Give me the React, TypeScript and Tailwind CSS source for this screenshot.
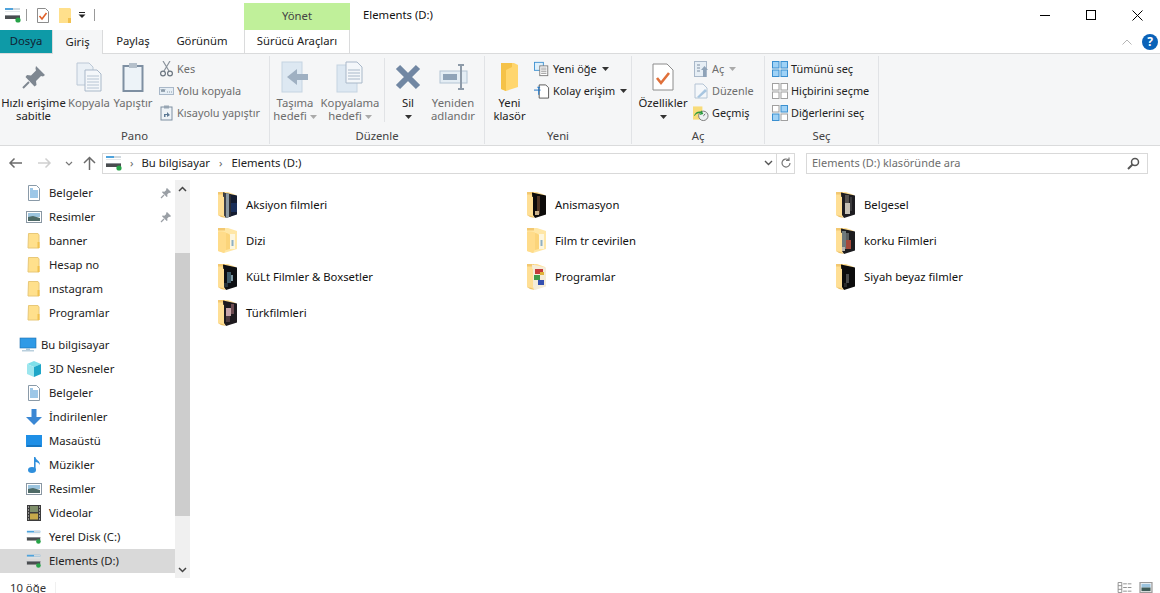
import React from "react";

const Drive = ({ s = 18 }: { s?: number }) => (
  <svg width={s} height={s} viewBox="0 0 18 18">
    <rect x="1" y="2" width="15" height="2" fill="#4fa3dc" />
    <rect x="9" y="2" width="7" height="2" fill="#cfd8de" />
    <rect x="1" y="5" width="15" height="1" fill="#e4e8ea" />
    <rect x="1" y="9" width="15" height="4" fill="#4a4d50" />
    <rect x="1" y="9" width="15" height="1" fill="#8d9196" />
    <circle cx="14" cy="14" r="2.6" fill="#27a348" />
  </svg>
);

const SmallFolder = () => (
  <svg width="16" height="18" viewBox="0 0 16 18">
    <path d="M2.5 1.5h9.500l1 1.500v13h-11z" fill="#ffe08c" stroke="#e8c878" strokeWidth="1" />
    <rect x="11.500" y="10" width="2" height="6" fill="#f2c14e" />
  </svg>
);

const Doc = () => (
  <svg width="16" height="18" viewBox="0 0 16 18">
    <path d="M2.5 1.5h8l3 3v12h-11z" fill="#fff" stroke="#8a9aa8" />
    <path d="M4 5h3M4 7h8M4 9h8M4 11h8M4 13h8" stroke="#3a8fd0" strokeWidth="1" />
  </svg>
);

const Pic = () => (
  <svg width="16" height="14" viewBox="0 0 16 14">
    <rect x="0.5" y="1.5" width="15" height="11" fill="#fff" stroke="#8a97a3" />
    <rect x="2" y="3" width="12" height="4" fill="#9cc4de" />
    <path d="M2 7l5-1 7 2v3H2z" fill="#4e6a66" />
  </svg>
);

const TinyPin = () => (
  <svg width="12" height="12" viewBox="0 0 12 12">
    <path d="M7 1l4 4-1 1-1-.3L7.200 7.600 7.500 9.500 6.700 10 2 5.300l.5-.8 1.900.3L6.300 3 6 2z" fill="#9a9fa5" />
    <path d="M4 8l-3 3" stroke="#9a9fa5" strokeWidth="1.2" />
  </svg>
);

const Computer = () => (
  <svg width="18" height="16" viewBox="0 0 18 16">
    <rect x="1" y="1" width="16" height="10" fill="#2f9ae6" stroke="#1c6fb0" strokeWidth="0.6" />
    <rect x="7" y="11" width="4" height="2" fill="#a9c8dd" />
    <rect x="3" y="13" width="12" height="1.5" fill="#b9cfdd" />
  </svg>
);

const Cube = () => (
  <svg width="16" height="18" viewBox="0 0 16 18">
    <path d="M8 1l7 3-7 3-7-3z" fill="#7fe0ea" />
    <path d="M1 4l7 3v10l-7-3z" fill="#9ce6ee" />
    <path d="M15 4L8 7v10l7-3z" fill="#1ea6c8" />
  </svg>
);

const Down = () => (
  <svg width="16" height="18" viewBox="0 0 16 18">
    <path d="M5.5 1h5v8H16l-8 8-8-8h5.500z" fill="#3a87d4" />
  </svg>
);

const Desk = () => (
  <svg width="16" height="14" viewBox="0 0 16 14">
    <rect x="0" y="1" width="16" height="12" fill="#1f8fe6" />
    <rect x="1" y="11.5" width="14" height="1" fill="#0f5f9e" />
  </svg>
);

const Music = () => (
  <svg width="14" height="18" viewBox="0 0 14 18">
    <ellipse cx="5" cy="14" rx="4" ry="3" fill="#2f8fdc" />
    <path d="M7 14V1h1.400c.4 3 4.600 3.600 4.600 8-1-2-3-3-4.400-3v8z" fill="#2f8fdc" />
  </svg>
);

const Film = () => (
  <svg width="14" height="16" viewBox="0 0 14 16">
    <rect x="0" y="0" width="14" height="16" fill="#3b3b3b" />
    <rect x="3" y="1" width="8" height="6" fill="#7f8f6a" />
    <rect x="3" y="8.500" width="8" height="6" fill="#c7a94a" />
    <path d="M1 2h1M1 5h1M1 8h1M1 11h1M1 14h1M12 2h1M12 5h1M12 8h1M12 11h1M12 14h1" stroke="#eee" />
  </svg>
);

type Patch = [number, number, number, number, string];

const FolderIcon = ({ id, base, patches }: { id: string; base: string; patches: Patch[] }) => (
  <svg width="22" height="28" viewBox="0 0 22 28">
    <defs>
      <clipPath id={id}>
        <path d="M6 1.500L20 4.500V23.500L9 27 7 24z" />
      </clipPath>
    </defs>
    <path d="M1 1h10l8 3v18L7 26 1 24z" fill="#ffdf95" />
    <path d="M1 1h7v2.500H1z" fill="#f3c871" />
    <g clipPath={`url(#${id})`}>
      <rect x="0" y="0" width="22" height="28" fill={base} />
      {patches.map(([x, y, w, h, c], i) => (
        <rect key={i} x={x} y={y} width={w} height={h} fill={c} />
      ))}
    </g>
    <path d="M1 5.500c2-.5 4-.5 6 .5v18l-1 1-5-1z" fill="#ffdf95" />
    <path d="M1 24l5 1 3 2-5-1z" fill="#eec36a" />
  </svg>
);

const Plain = ({ id }: { id: string }) => (
  <svg width="22" height="28" viewBox="0 0 22 28">
    <path d="M1 1h10l9 3v18l-13 4-6-2z" fill="#ffe7a6" />
    <path d="M1 1h7v2.500H1z" fill="#f3c871" />
    <rect x="13" y="7" width="5" height="15" fill="#fdf6de" />
    <rect x="14.500" y="13" width="2" height="6" fill="#8fb0c4" id={id} />
    <path d="M1 5c2-.6 5-.6 8 .5v17L7 26l-6-2z" fill="#ffdc8a" />
    <path d="M9 6c2 0 3 1 4 2v14l-4 1z" fill="#fbd47a" />
  </svg>
);

const files: { n: string; id: string; base?: string; p?: Patch[] }[] = [
  { n: "Aksiyon filmleri", id: "a", base: "#141c30", p: [[6, 0, 3, 28, "#3c3f46"], [9, 0, 3, 28, "#8c9aa3"], [12, 0, 2, 28, "#2a2c33"], [14, 12, 6, 9, "#1a2f5a"]] },
  { n: "Anismasyon", id: "b", base: "#0d0b0a", p: [[11, 5, 3, 18, "#4f3524"], [9, 20, 4, 4, "#c9b08a"]] },
  { n: "Belgesel", id: "c", base: "#1d1c20", p: [[10, 4, 4, 8, "#56524e"], [10, 12, 5, 11, "#c6c0b4"], [15, 6, 2, 14, "#3b3a3c"]] },
  { n: "Dizi", id: "d" },
  { n: "Film tr cevirilen", id: "e" },
  { n: "korku Filmleri", id: "f", base: "#1c1c1f", p: [[7, 4, 4, 18, "#6f7a7c"], [11, 6, 3, 7, "#5a5f60"], [11, 13, 5, 9, "#a4493a"], [7, 20, 3, 4, "#b9b4ad"]] },
  { n: "KüLt Filmler & Boxsetler", id: "g", base: "#0d0f13", p: [[10, 9, 4, 11, "#3f5b69"], [14, 12, 2, 6, "#7d9aa6"], [7, 20, 4, 4, "#26323a"]] },
  { n: "Programlar", id: "h", base: "#f4ecd9", p: [[9, 6, 8, 5, "#c43a3a"], [8, 12, 6, 5, "#3f9a4a"], [12, 17, 6, 5, "#3450b0"], [14, 9, 4, 3, "#e0b23a"]] },
  { n: "Siyah beyaz filmler", id: "i", base: "#0c0c0c", p: [[11, 11, 3, 9, "#4a4a4a"], [9, 20, 3, 4, "#2a2a2a"]] },
  { n: "Türkfilmleri", id: "j", base: "#1e1a1e", p: [[9, 9, 5, 8, "#c7a4a8"], [14, 5, 3, 10, "#6b4a50"], [9, 17, 4, 6, "#4d3a3f"]] },
];

const sideTop: { n: string; icon: React.ReactNode; pin?: boolean }[] = [
  { n: "Belgeler", icon: <Doc />, pin: true },
  { n: "Resimler", icon: <Pic />, pin: true },
  { n: "banner", icon: <SmallFolder /> },
  { n: "Hesap no", icon: <SmallFolder /> },
  { n: "ınstagram", icon: <SmallFolder /> },
  { n: "Programlar", icon: <SmallFolder /> },
];

const sideBottom: { n: string; icon: React.ReactNode }[] = [
  { n: "3D Nesneler", icon: <Cube /> },
  { n: "Belgeler", icon: <Doc /> },
  { n: "İndirilenler", icon: <Down /> },
  { n: "Masaüstü", icon: <Desk /> },
  { n: "Müzikler", icon: <Music /> },
  { n: "Resimler", icon: <Pic /> },
  { n: "Videolar", icon: <Film /> },
  { n: "Yerel Disk (C:)", icon: <Drive /> },
];

const Caret = ({ c = "#333" }: { c?: string }) => (
  <svg width="7" height="4" viewBox="0 0 7 4" className="inline-block">
    <path d="M0 0h7L3.500 4z" fill={c} />
  </svg>
);

const Big = ({ icon, l1, l2, dim, w }: { icon: React.ReactNode; l1: string; l2?: React.ReactNode; dim?: boolean; w: string }) => (
  <div className={`flex flex-col items-center ${w} ${dim ? "text-[#6d6d6d]" : "text-[#222]"}`}>
    <div className="flex h-[37px] items-center justify-center">{icon}</div>
    <div className="mt-px whitespace-nowrap leading-[13px]">{l1}</div>
    {l2 && <div className="whitespace-nowrap leading-[13px]">{l2}</div>}
  </div>
);

const Small = ({ icon, t, dim, after }: { icon: React.ReactNode; t: string; dim?: boolean; after?: React.ReactNode }) => (
  <div className={`flex h-[22px] items-center gap-[3px] whitespace-nowrap text-[10.9px] ${dim ? "text-[#6d6d6d]" : "text-[#222]"}`}>
    <div className="flex w-[16px] shrink-0 items-center justify-center">{icon}</div>
    <span>{t}</span>
    {after}
  </div>
);

const Group = ({ w, label, children }: { w: string; label: string; children: React.ReactNode }) => (
  <div className={`flex h-[88px] shrink-0 flex-col border-r border-[#e1e3e6] ${w}`}>
    <div className="flex h-[73px] items-start pt-[2px]">{children}</div>
    <div className="text-center leading-[13px] text-[#444]">{label}</div>
  </div>
);

const Grid = ({ on }: { on: number[] }) => (
  <svg width="16" height="16" viewBox="0 0 16 16">
    {[[0, 0], [8.5, 0], [0, 8.5], [8.5, 8.5]].map(([x, y], i) => (
      <rect key={i} x={x + 0.5} y={y + 0.5} width="6.5" height="6.5"
        fill={on.includes(i) ? "#9fd2f6" : "#fff"}
        stroke={on.includes(i) ? "#3a8fd0" : "#a0a0a0"} />
    ))}
  </svg>
);

export default function App() {
  return (
    <div className="flex h-[593px] w-[1160px] flex-col overflow-hidden bg-white text-[11.3px] text-[#222]" style={{ fontFamily: '"Noto Sans", sans-serif' }}>
      {/* Title bar */}
      <div className="flex h-[30px] shrink-0 items-start">
        <div className="flex h-[30px] w-[244px] items-center pl-[4px]">
          <Drive />
          <div className="ml-[4px] h-[12px] w-px bg-[#999]" />
          <svg className="ml-[9px]" width="14" height="17" viewBox="0 0 14 17">
            <path d="M1.500 1.500h8l3 3v11h-11z" fill="#fff" stroke="#8c8c8c" />
            <path d="M3.500 9l2.500 3 4.500-6" fill="none" stroke="#e0612a" strokeWidth="1.6" />
          </svg>
          <svg className="ml-[8px]" width="14" height="17" viewBox="0 0 14 17">
            <path d="M1 1h11l1 1v14H1z" fill="#ffe08c" />
            <rect x="10" y="11" width="3" height="5" fill="#f2c14e" />
          </svg>
          <svg className="ml-[6px]" width="8" height="8" viewBox="0 0 8 8">
            <rect x="1" y="1" width="6" height="1" fill="#222" />
            <path d="M0.500 3.500h7L4 7z" fill="#222" />
          </svg>
          <div className="ml-[8px] h-[12px] w-px bg-[#999]" />
        </div>
        <div className="mt-[3px] flex h-[27px] w-[106px] items-center justify-center bg-[#c0f09a] text-[#444]">Yönet</div>
        <div className="ml-[13px] flex h-[30px] flex-1 items-center text-[#111]">Elements (D:)</div>
        <div className="flex h-[30px] w-[138px] items-center">
          <div className="flex w-[46px] justify-center"><div className="h-px w-[10px] bg-black" /></div>
          <div className="flex w-[46px] justify-center"><div className="h-[10px] w-[10px] border border-black" /></div>
          <div className="flex w-[46px] justify-center">
            <svg width="11" height="11" viewBox="0 0 11 11"><path d="M0.500 0.500l10 10M10.500 0.500l-10 10" stroke="#000" /></svg>
          </div>
        </div>
      </div>
      {/* Tabs */}
      <div className="relative flex h-[24px] shrink-0 items-stretch border-b border-[#dadbdc]">
        <div className="flex w-[52px] items-center justify-center bg-[#0e9aa7] text-[#123]">Dosya</div>
        <div className="z-10 -mb-px flex w-[51px] items-center justify-center border-x border-[#dadbdc] bg-[#f5f6f7]">Giriş</div>
        <div className="flex w-[60px] items-center justify-center">Paylaş</div>
        <div className="flex w-[78px] items-center justify-center">Görünüm</div>
        <div className="ml-[3px] flex w-[106px] items-center justify-center border-x border-[#dadbdc]">Sürücü Araçları</div>
        <div className="flex flex-1 items-center justify-end gap-[10px] pr-[2px]">
          <svg width="10" height="6" viewBox="0 0 10 6"><path d="M0.500 5.500L5 1l4.500 4.500" fill="none" stroke="#b5b5b5" /></svg>
          <div className="flex h-[16px] w-[16px] items-center justify-center rounded-full bg-[#0a62b8] text-[12px] font-bold leading-none text-white">?</div>
        </div>
      </div>
      {/* Ribbon */}
      <div className="flex h-[92px] shrink-0 items-start border-b border-[#dadbdc] bg-[#f5f6f7] pt-[2px]">
        <Group w="w-[270px]" label="Pano">
          <div className="flex w-[158px] pl-[2px]">
            <Big w="w-[63px]" l1="Hızlı erişime" l2="sabitle" icon={
              <svg width="24" height="24" viewBox="0 0 24 24">
                <path d="M14 1l9 9-2 1.500-2-.5-5 5 .5 4-2 1.500L3.500 12 5 10l4 .5 5-5-.5-2z" fill="#7e8791" />
                <path d="M7 17l-6 6" stroke="#7e8791" strokeWidth="2" />
              </svg>} />
            <Big w="w-[48px]" dim l1="Kopyala" icon={
              <svg width="26" height="30" viewBox="0 0 26 30">
                <path d="M1 1h12l4 4v18H1z" fill="#eaf0f6" stroke="#bcc8d6" />
                <path d="M9 8h12l4 4v17H9z" fill="#f4f7fa" stroke="#a9b8c9" />
                <path d="M11 14h12M11 17h12M11 20h12M11 23h12M11 26h12" stroke="#b6c4d3" />
              </svg>} />
            <Big w="w-[40px]" dim l1="Yapıştır" icon={
              <svg width="22" height="30" viewBox="0 0 22 30">
                <rect x="1.500" y="4" width="19" height="25" fill="#edf3f8" stroke="#7e8fa2" strokeWidth="2" />
                <rect x="7" y="1" width="8" height="5" fill="#b5c0cb" />
              </svg>} />
          </div>
          <div className="flex flex-col">
            <Small dim t="Kes" icon={
              <svg width="13" height="16" viewBox="0 0 13 16">
                <path d="M3 0l6 10M10 0L4 10" stroke="#8a929b" strokeWidth="1.2" />
                <circle cx="3" cy="12.500" r="2.400" fill="none" stroke="#6b7681" strokeWidth="1.2" />
                <circle cx="10" cy="12.500" r="2.400" fill="none" stroke="#6b7681" strokeWidth="1.2" />
              </svg>} />
            <Small dim t="Yolu kopyala" icon={
              <svg width="15" height="8" viewBox="0 0 15 8">
                <rect x="0.500" y="0.500" width="14" height="7" fill="#e6eef5" stroke="#a9b8c9" />
                <path d="M2 2l1 3 1-3 1 3 1-3M8 5h1M10 5h1M12 5h1" stroke="#66788a" strokeWidth="0.7" fill="none" />
              </svg>} />
            <Small dim t="Kısayolu yapıştır" icon={
              <svg width="13" height="16" viewBox="0 0 13 16">
                <rect x="1" y="2" width="11" height="13" fill="#eef3f7" stroke="#7e8fa2" />
                <rect x="4" y="0.500" width="5" height="3" fill="#97a5b3" />
                <path d="M4 12V9h3V7l3 3-3 2v-2H5.500v2z" fill="#5d7a96" />
              </svg>} />
          </div>
        </Group>
        <Group w="w-[215px]" label="Düzenle">
          <div className="flex w-[115px] border-r border-[#e1e3e6]">
            <Big w="w-[50px]" dim l1="Taşıma" l2={<>hedefi <Caret c="#aaa" /></>} icon={
              <svg width="28" height="32" viewBox="0 0 28 32">
                <rect x="1" y="1" width="20" height="30" fill="#dde8f2" stroke="#c5d4e2" />
                <path d="M27 13H16V8L6 16l10 8v-5h11z" fill="#9fb0c2" />
              </svg>} />
            <Big w="w-[60px]" dim l1="Kopyalama" l2={<>hedefi <Caret c="#aaa" /></>} icon={
              <svg width="28" height="32" viewBox="0 0 28 32">
                <rect x="1" y="4" width="20" height="27" fill="#dde8f2" stroke="#c5d4e2" />
                <path d="M10 1h11l5 5v16H10z" fill="#f4f7fa" stroke="#a9b8c9" />
                <path d="M12 9h12M12 12h12M12 15h12M12 18h12" stroke="#a9b8c9" />
              </svg>} />
          </div>
          <div className="flex">
            <Big w="w-[46px]" l1="Sil" l2={<Caret />} icon={
              <svg width="26" height="26" viewBox="0 0 26 26">
                <path d="M3 3l20 20M23 3L3 23" stroke="#7187a3" strokeWidth="6" />
              </svg>} />
            <Big w="w-[44px]" dim l1="Yeniden" l2="adlandır" icon={
              <svg width="29" height="26" viewBox="0 0 29 26">
                <rect x="1" y="7" width="27" height="12" fill="#e4edf4" stroke="#b4c4d4" />
                <rect x="4" y="10" width="14" height="6" fill="#8fa3b8" />
                <path d="M19 1h6M19 25h6M22 1v24" stroke="#8d9aa8" strokeWidth="2" />
              </svg>} />
          </div>
        </Group>
        <Group w="w-[147px]" label="Yeni">
          <div className="flex">
            <Big w="w-[49px]" l1="Yeni" l2="klasör" icon={
              <svg width="20" height="30" viewBox="0 0 20 30">
                <path d="M1 1h13l4 2v22L6 29 1 27z" fill="#ffd66e" />
                <path d="M1 1h11v4L6 8v21l-5-2z" fill="#f5c248" />
              </svg>} />
            <div className="flex flex-col">
              <Small t="Yeni öğe" after={<span className="ml-[2px] -mt-[2px]"><Caret /></span>} icon={
                <svg width="18" height="16" viewBox="0 0 18 16">
                  <rect x="0.500" y="0.500" width="10" height="9" fill="#dff0fb" stroke="#3a8fd0" />
                  <rect x="6.500" y="4.500" width="9" height="11" fill="#fff" stroke="#777" />
                  <path d="M8 7h6M8 9h6M8 11h6M8 13h6" stroke="#999" />
                </svg>} />
              <Small t="Kolay erişim" after={<span className="ml-[2px] -mt-[2px]"><Caret /></span>} icon={
                <svg width="17" height="17" viewBox="0 0 17 17">
                  <path d="M5.500 1.500h7l3 3v11h-10z" fill="#fff" stroke="#555" />
                  <path d="M0 7h7M5 4v8M3.500 4h3" stroke="#1a73c8" fill="none" />
                </svg>} />
            </div>
          </div>
        </Group>
        <Group w="w-[133px]" label="Aç">
          <div className="flex pl-[4px]">
            <Big w="w-[54px]" l1="Özellikler" l2={<Caret />} icon={
              <svg width="22" height="28" viewBox="0 0 22 28">
                <path d="M1 1h14l6 6v20H1z" fill="#fff" stroke="#8c8c8c" />
                <path d="M5 15l4 5 8-10" fill="none" stroke="#e0703a" strokeWidth="2.6" />
              </svg>} />
            <div className="flex flex-col pl-[3px]">
              <Small dim t="Aç" after={<span className="ml-[2px] -mt-[2px]"><Caret c="#aaa" /></span>} icon={
                <svg width="15" height="16" viewBox="0 0 15 16">
                  <rect x="0.500" y="0.500" width="12" height="15" fill="#e6eef5" stroke="#a9b8c9" />
                  <path d="M3 4h3M3 7h3M3 10h3" stroke="#7e8fa2" />
                  <path d="M9 16V9H7l3.500-4L14 9h-2v7z" fill="#8fa3b8" />
                </svg>} />
              <Small dim t="Düzenle" icon={
                <svg width="15" height="16" viewBox="0 0 15 16">
                  <path d="M1 1h8l4 4v10H1z" fill="#f4f7fa" stroke="#b4c4d4" />
                  <path d="M3 14l8-8 2 2-8 7z" fill="#a8c6e0" />
                </svg>} />
              <Small t="Geçmiş" icon={
                <svg width="17" height="17" viewBox="0 0 17 17">
                  <rect x="0" y="1" width="10" height="14" fill="#f8dc7a" />
                  <circle cx="11" cy="11" r="5" fill="#eef1f3" stroke="#777" />
                  <path d="M11 11l2-2" stroke="#555" />
                  <path d="M2 11a6 5 0 0 1 6-3l-1 2 4-1-2-4-.5 1.500A7 7 0 0 0 1 11z" fill="#2c9a3f" />
                </svg>} />
            </div>
          </div>
        </Group>
        <Group w="w-[114px]" label="Seç">
          <div className="flex flex-col pl-[7px]">
            <Small t="Tümünü seç" icon={<Grid on={[0, 1, 2, 3]} />} />
            <Small t="Hiçbirini seçme" icon={<Grid on={[]} />} />
            <Small t="Diğerlerini seç" icon={<Grid on={[1, 2]} />} />
          </div>
        </Group>
      </div>
      {/* Address bar */}
      <div className="flex h-[34px] shrink-0 items-center">
        <div className="flex w-[102px] items-center pl-[8px]">
          <svg width="15" height="12" viewBox="0 0 15 12"><path d="M14 6H2M6.500 1.500L2 6l4.500 4.500" fill="none" stroke="#6b6b6b" strokeWidth="1.5" /></svg>
          <svg className="ml-[14px]" width="15" height="12" viewBox="0 0 15 12"><path d="M1 6h12M8.500 1.500L13 6l-4.500 4.500" fill="none" stroke="#cfcfcf" strokeWidth="1.5" /></svg>
          <svg className="ml-[13px]" width="8" height="5" viewBox="0 0 8 5"><path d="M1 1l3 3 3-3" fill="none" stroke="#777" strokeWidth="1.2" /></svg>
          <svg className="ml-[10px]" width="13" height="14" viewBox="0 0 13 14"><path d="M6.500 14V2M1 7l5.500-5.500L12 7" fill="none" stroke="#6b6b6b" strokeWidth="1.5" /></svg>
        </div>
        <div className="flex h-[21px] w-[693px] items-center border border-[#d9d9d9] pl-[2px]">
          <Drive />
          <span className="ml-[7px] text-[#666]">›</span>
          <span className="ml-[8px]">Bu bilgisayar</span>
          <span className="ml-[9px] text-[#666]">›</span>
          <span className="ml-[9px]">Elements (D:)</span>
          <div className="ml-auto flex h-full items-center">
            <svg width="9" height="6" viewBox="0 0 9 6" className="mr-[3px]"><path d="M1 1l3.500 3.500L8 1" fill="none" stroke="#555" strokeWidth="1.4" /></svg>
            <div className="flex h-full w-[18px] items-center justify-center border-l border-[#d9d9d9]">
              <svg width="12" height="12" viewBox="0 0 12 12"><path d="M10 6a4 4 0 1 1-1.500-3.100M9 0.500V3.500H6" fill="none" stroke="#777" strokeWidth="1.2" /></svg>
            </div>
          </div>
        </div>
        <div className="ml-[11px] flex h-[21px] w-[342px] items-center justify-between border border-[#d9d9d9] pl-[5px] pr-[7px] text-[11px] text-[#6d6d6d]">
          <span>Elements (D:) klasöründe ara</span>
          <svg width="13" height="13" viewBox="0 0 13 13"><circle cx="8" cy="5" r="3.500" fill="none" stroke="#555" strokeWidth="1.5" /><path d="M5.500 7.500L1 12" stroke="#555" strokeWidth="2" /></svg>
        </div>
      </div>
      {/* Main */}
      <div className="flex h-[398px] shrink-0">
        <div className="flex w-[175px] shrink-0 flex-col pt-px">
          {sideTop.map((r) => (
            <div key={r.n} className="flex h-[24px] shrink-0 items-center">
              <div className="flex w-[48px] shrink-0 justify-end pr-[6px]"><div className="flex w-[16px] justify-center">{r.icon}</div></div>
              <span className="ml-px flex-1">{r.n}</span>
              {r.pin && <div className="mr-[3px]"><TinyPin /></div>}
            </div>
          ))}
          <div className="mt-[8px] flex h-[24px] shrink-0 items-center">
            <div className="ml-[19px] flex w-[22px] shrink-0"><Computer /></div>
            <span>Bu bilgisayar</span>
          </div>
          {sideBottom.map((r, i) => (
            <div key={i} className="flex h-[24px] shrink-0 items-center">
              <div className="flex w-[48px] shrink-0 justify-end pr-[6px]"><div className="flex w-[16px] justify-center">{r.icon}</div></div>
              <span className="ml-px">{r.n}</span>
            </div>
          ))}
          <div className="flex h-[24px] shrink-0 items-center bg-[#d9d9d9]">
            <div className="flex w-[48px] shrink-0 justify-end pr-[6px]"><div className="flex w-[16px] justify-center"><Drive /></div></div>
            <span className="ml-px">Elements (D:)</span>
          </div>
        </div>
        <div className="flex w-[15px] shrink-0 flex-col bg-[#f0f0f0]">
          <div className="flex h-[17px] shrink-0 items-center justify-center">
            <svg width="9" height="6" viewBox="0 0 9 6"><path d="M1 5l3.500-3.500L8 5" fill="none" stroke="#444" strokeWidth="1.500" /></svg>
          </div>
          <div className="mt-[56px] h-[263px] shrink-0 bg-[#cdcdcd]" />
          <div className="mt-auto flex h-[17px] shrink-0 items-center justify-center">
            <svg width="9" height="6" viewBox="0 0 9 6"><path d="M1 1l3.500 3.500L8 1" fill="none" stroke="#444" strokeWidth="1.500" /></svg>
          </div>
        </div>
        <div className="grid flex-1 auto-rows-[36px] grid-cols-[309px_309px_309px] content-start pl-[27px] pt-[7px]">
          {files.map((f) => (
            <div key={f.id} className="flex items-center">
              <div className="flex w-[29px] shrink-0">
                {f.p ? <FolderIcon id={f.id} base={f.base ?? "#000"} patches={f.p} /> : <Plain id={f.id} />}
              </div>
              <span className="text-[#111]">{f.n}</span>
            </div>
          ))}
        </div>
      </div>
      {/* Status */}
      <div className="flex h-[15px] shrink-0 items-start justify-between pl-[10px] pr-[7px] pt-[4px] text-[#333]">
        <div className="flex items-center leading-[11px]"><span>10 öğe</span><div className="ml-[9px] h-[11px] w-px bg-[#f0f0f0]" /></div>
        <div className="flex items-center gap-[6px]">
          <svg width="16" height="11" viewBox="0 0 16 12"><path d="M0.500 0.500h4v11h-4zM0.500 4h4M0.500 8h4M6 2h4M11 2h4M6 6h4M11 6h4M6 10h4M11 10h4" fill="none" stroke="#8a8a8a" /></svg>
          <svg width="14" height="11" viewBox="0 0 14 12"><rect x="0.500" y="0.500" width="13" height="11" fill="#fff" stroke="#9a9a9a" strokeWidth="1.400" /><rect x="2" y="2" width="10" height="4" fill="#9cc4de" /><rect x="2" y="6" width="10" height="4" fill="#3f5c58" /></svg>
        </div>
      </div>
    </div>
  );
}
